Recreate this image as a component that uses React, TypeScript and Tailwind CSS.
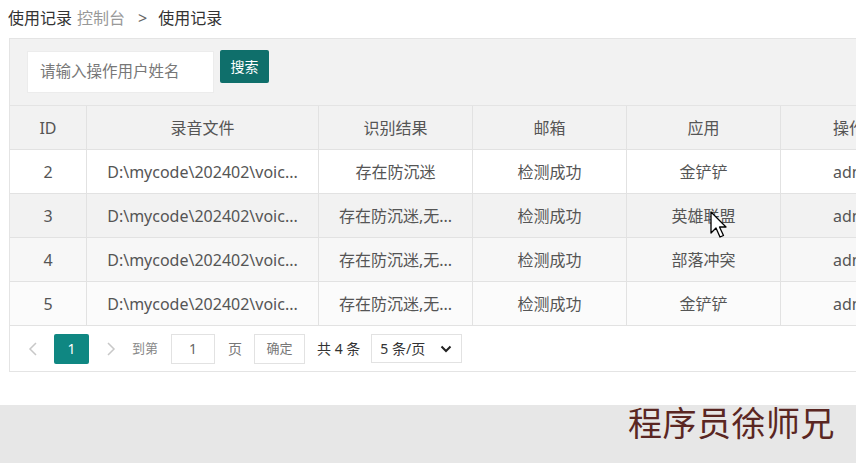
import React from "react";

const FONT = '"Noto Sans", "Noto Sans CJK SC", sans-serif';

const rows = [
  { id: "2", file: "D:\\mycode\\202402\\voic...", result: "存在防沉迷", mail: "检测成功", app: "金铲铲", bg: "bg-white" },
  { id: "3", file: "D:\\mycode\\202402\\voic...", result: "存在防沉迷,无...", mail: "检测成功", app: "英雄联盟", bg: "bg-[#f2f2f2]" },
  { id: "4", file: "D:\\mycode\\202402\\voic...", result: "存在防沉迷,无...", mail: "检测成功", app: "部落冲突", bg: "bg-[#f7f7f7]" },
  { id: "5", file: "D:\\mycode\\202402\\voic...", result: "存在防沉迷,无...", mail: "检测成功", app: "金铲铲", bg: "bg-[#fbfbfb]" },
];

const widths = ["w-[76px]", "w-[232px]", "w-[154px]", "w-[154px]", "w-[154px]", "w-[154px]"];

function Row({ cells, bg }: { cells: React.ReactNode[]; bg: string }) {
  return (
    <div className={`flex h-[44px] ${bg} border-b border-[#e2e2e2] text-[16px] text-[#555]`}>
      {cells.map((c, i) => (
        <div
          key={i}
          className={`${widths[i]} shrink-0 flex items-center ${i === 5 ? "justify-start pl-[52px]" : "justify-center"} ${i === 0 ? "" : "border-l border-[#e2e2e2]"} overflow-hidden whitespace-nowrap`}
        >
          {c}
        </div>
      ))}
    </div>
  );
}

export default function App() {
  return (
    <div className="w-[856px] h-[463px] overflow-hidden bg-white relative" style={{ fontFamily: FONT }}>
      {/* breadcrumb */}
      <div className="h-[38px] flex items-center pl-[8px] pb-[3px] text-[16px]">
        <span className="text-[#333]">使用记录</span>
        <span className="text-[#999] ml-[5px]">控制台</span>
        <span className="text-[#666] ml-[13px]">&gt;</span>
        <span className="text-[#333] ml-[11px]">使用记录</span>
      </div>

      {/* panel */}
      <div className="ml-[9px] w-[900px] border border-[#e4e4e4] bg-white">
        <div className="h-[67px] bg-[#f2f2f2] flex items-start pl-[17px] pt-[12px] border-b border-[#e4e4e4]">
          <div className="w-[187px] h-[42px] bg-white border border-[#ececec] flex items-center pl-[12px] text-[15.5px] text-[#777]">
            请输入操作用户姓名
          </div>
          <div className="ml-[6px] -mt-[1px] w-[49px] h-[33px] bg-[#0f6f6b] rounded-[2px] flex items-center justify-center text-white text-[14px]">
            搜索
          </div>
        </div>

        <Row bg="bg-[#f2f2f2]" cells={["ID", "录音文件", "识别结果", "邮箱", "应用", "操作"]} />
        {rows.map((r) => (
          <Row key={r.id} bg={r.bg} cells={[r.id, r.file, r.result, r.mail, r.app, "admin"]} />
        ))}

        {/* pagination */}
        <div className="h-[45px] flex items-center pl-[13px] text-[14px]">
          <span className="w-[20px] flex justify-center">
            <svg width="10" height="16" viewBox="0 0 10 16"><path d="M8 2 L2 8 L8 14" fill="none" stroke="#c8c8c8" strokeWidth="1.5" /></svg>
          </span>
          <div className="ml-[11px] w-[35px] h-[30px] bg-[#0f8782] rounded-[2px] flex items-center justify-center text-white text-[14px]">1</div>
          <span className="ml-[12px] w-[20px] flex justify-center">
            <svg width="10" height="16" viewBox="0 0 10 16"><path d="M2 2 L8 8 L2 14" fill="none" stroke="#c8c8c8" strokeWidth="1.5" /></svg>
          </span>
          <span className="ml-[11px] text-[#888] text-[13px]">到第</span>
          <div className="ml-[13px] w-[44px] h-[30px] border border-[#e2e2e2] flex items-center justify-center text-[#666]">1</div>
          <span className="ml-[13px] text-[#777]">页</span>
          <div className="ml-[12px] w-[51px] h-[30px] border border-[#e2e2e2] flex items-center justify-center text-[#777] text-[13px]">确定</div>
          <span className="ml-[12px] text-[#333]">共 4 条</span>
          <div className="ml-[11px] w-[91px] h-[29px] border border-[#e2e2e2] flex items-center justify-between pl-[8px] pr-[9px] text-[#333]">
            <span>5 条/页</span>
            <svg width="12" height="8" viewBox="0 0 12 8"><path d="M1.5 1.5 L6 6 L10.5 1.5" fill="none" stroke="#222" strokeWidth="2" /></svg>
          </div>
        </div>
      </div>

      {/* bottom band */}
      <div className="absolute left-0 right-0 top-[405px] bottom-0 bg-[#e7e7e7]">
        <div className="absolute left-[628px] top-[-5px] text-[34px] leading-[44px] text-[#5a2622] tracking-[0.5px]" style={{ fontFamily: '"Noto Sans CJK SC", serif' }}>
          程序员徐师兄
        </div>
      </div>

      {/* mouse cursor */}
      <svg className="absolute left-[710px] top-[211px]" width="18" height="28" viewBox="0 0 18 28">
        <path d="M1 1 L1 22 L6 17 L10 26 L13.5 24.5 L9.5 16 L16 16 Z" fill="#fff" stroke="#000" strokeWidth="1.3" strokeLinejoin="round" />
      </svg>
    </div>
  );
}
